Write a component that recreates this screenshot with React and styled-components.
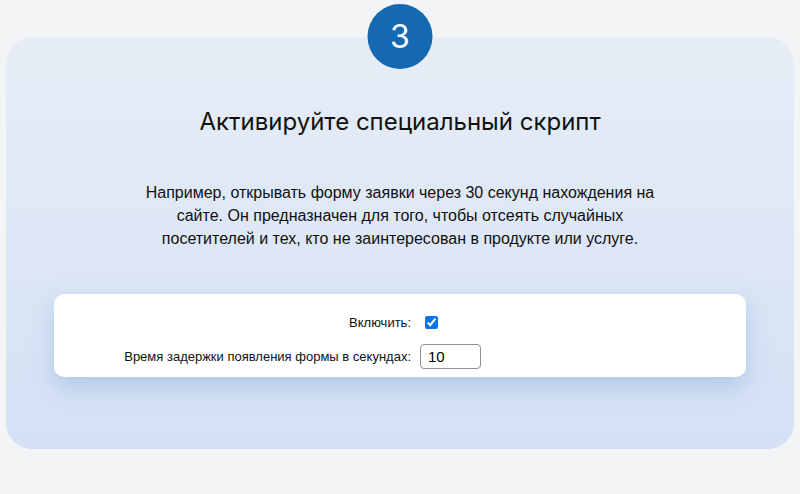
import React, { useState } from 'react';
import styled, { createGlobalStyle } from 'styled-components';

const GlobalStyle = createGlobalStyle`
  html, body {
    margin: 0;
    padding: 0;
    background: #f3f4f6;
  }
  body {
    font-family: "Liberation Sans", Arial, sans-serif;
    color: #111;
  }
`;

const Page = styled.div`
  padding: 37px 6px 45px;
`;

const Card = styled.section`
  position: relative;
  height: 412px;
  box-sizing: border-box;
  border-radius: 26px;
  background: linear-gradient(180deg, #e7edf6 0%, #d4e1f5 100%);
  padding: 67px 48px 0;
  display: flex;
  flex-direction: column;
  align-items: center;
`;

const StepBadge = styled.div`
  position: absolute;
  top: -33px;
  left: 50%;
  transform: translateX(-50%);
  width: 65px;
  height: 65px;
  border-radius: 50%;
  background: #1469b2;
  color: #fff;
  font-family: Inter, "Noto Sans", sans-serif;
  font-size: 32px;
  display: flex;
  align-items: center;
  justify-content: center;
`;

const Title = styled.h2`
  margin: 0;
  font-family: Inter, "Noto Sans", sans-serif;
  font-weight: 400;
  font-size: 24px;
  line-height: 36px;
  color: #111;
  text-align: center;
`;

const Description = styled.p`
  margin: 41px 0 0;
  width: 520px;
  font-size: 16px;
  line-height: 23px;
  text-align: center;
  color: #111;
`;

const Panel = styled.div`
  align-self: stretch;
  margin-top: 44px;
  background: #fff;
  border-radius: 10px;
  box-shadow: 0 10px 24px rgba(150, 180, 225, 0.6);
  padding: 15px 0 8px;
  display: grid;
  grid-template-columns: 357px 1fr;
  column-gap: 9px;
  row-gap: 9px;
  align-items: center;
`;

const Label = styled.label`
  justify-self: end;
  font-size: 13px;
  color: #111;
`;

const Control = styled.div`
  display: flex;
  align-items: center;
  height: ${(p) => p.h}px;
`;

const Check = styled.input`
  width: 13px;
  height: 13px;
  margin: 0 0 0 5px;
  accent-color: #0b74e8;
`;

const NumberInput = styled.input`
  width: 61px;
  height: 25px;
  box-sizing: border-box;
  border: 1px solid #8f8f8f;
  border-radius: 4px;
  padding: 0 7px;
  font-family: "Liberation Sans", Arial, sans-serif;
  font-size: 15px;
  color: #000;
  background: #fff;
`;

export default function App() {
  const [enabled, setEnabled] = useState(true);
  const [delay, setDelay] = useState('10');

  return (
    <>
      <GlobalStyle />
      <Page>
        <Card>
          <StepBadge>3</StepBadge>
          <Title>Активируйте специальный скрипт</Title>
          <Description>
            Например, открывать форму заявки через 30 секунд нахождения на сайте. Он предназначен
            для того, чтобы отсеять случайных посетителей и тех, кто не заинтересован в продукте или услуге.
          </Description>
          <Panel>
            <Label htmlFor="enable">Включить:</Label>
            <Control h={26}>
              <Check
                id="enable"
                type="checkbox"
                checked={enabled}
                onChange={(e) => setEnabled(e.target.checked)}
              />
            </Control>
            <Label htmlFor="delay">Время задержки появления формы в секундах:</Label>
            <Control h={25}>
              <NumberInput
                id="delay"
                type="text"
                value={delay}
                onChange={(e) => setDelay(e.target.value)}
              />
            </Control>
          </Panel>
        </Card>
      </Page>
    </>
  );
}
